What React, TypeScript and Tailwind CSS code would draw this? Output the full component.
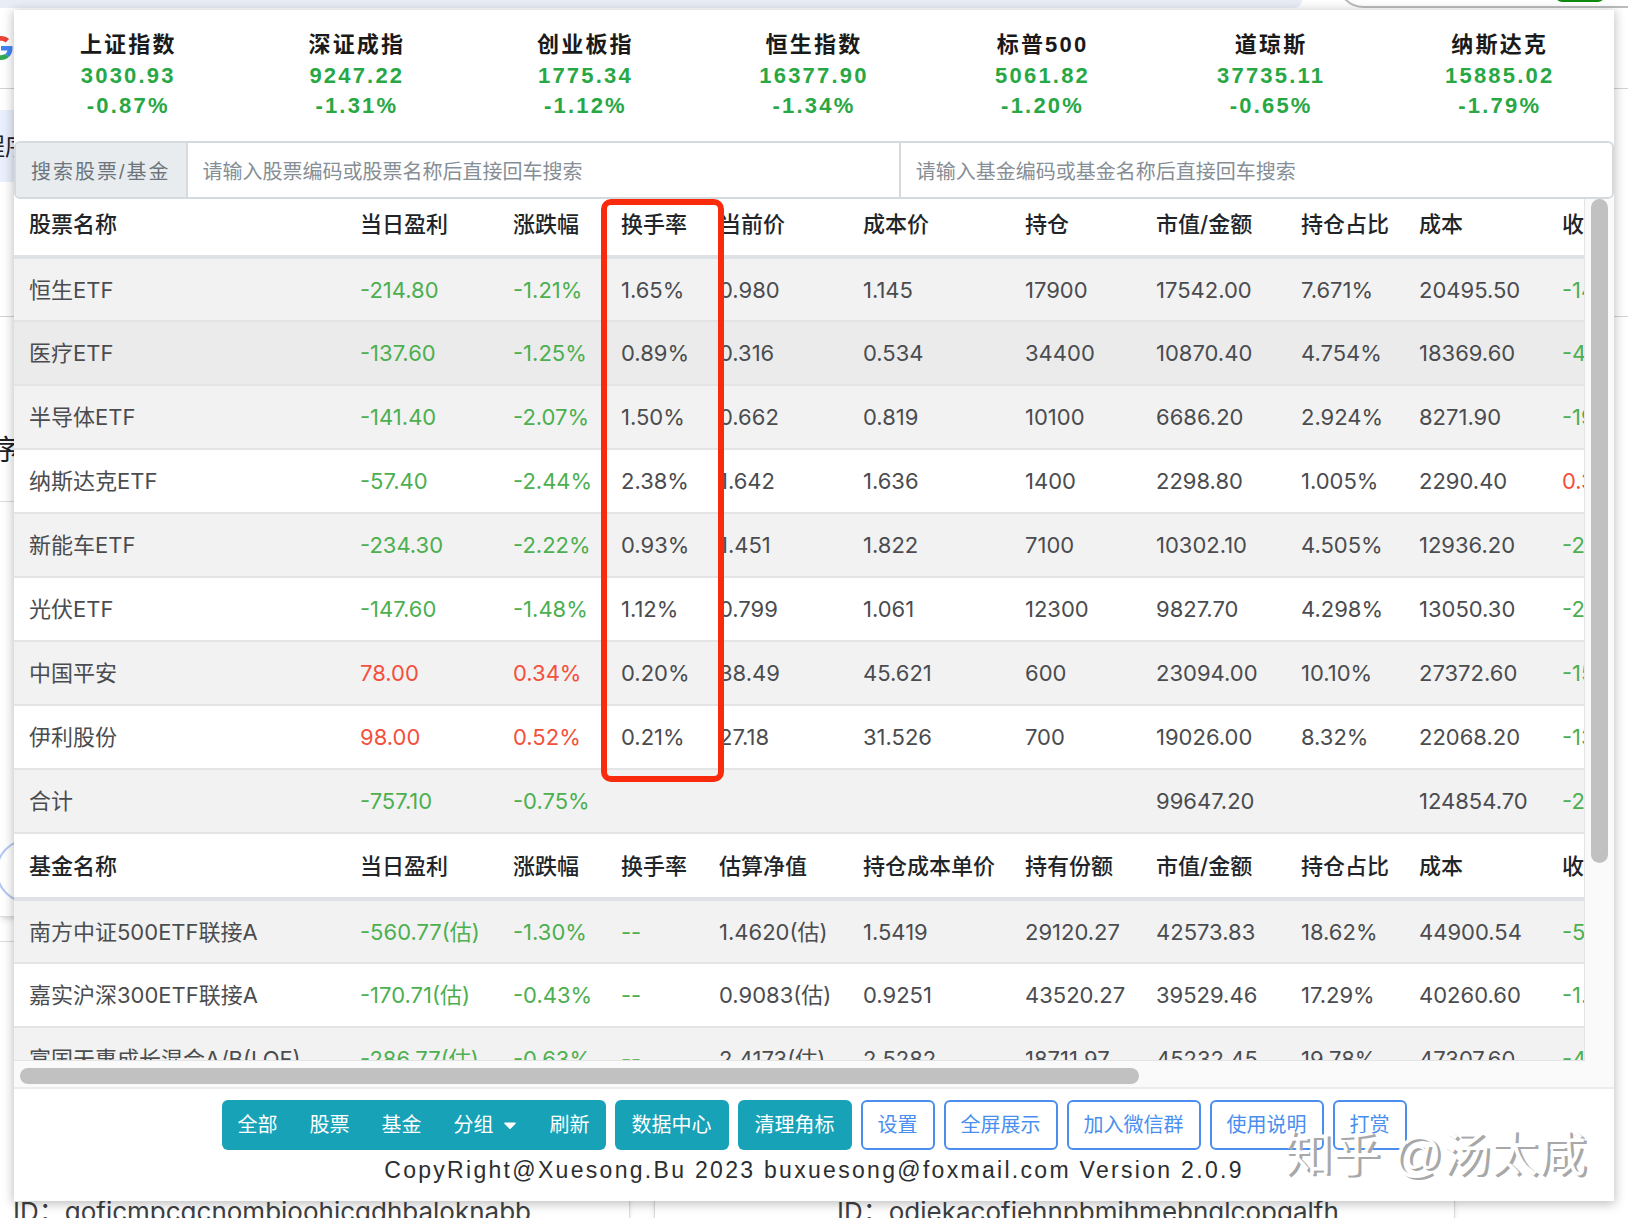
import React from 'react';
import { FaCaretDown } from 'react-icons/fa';

interface IndexQuote {
  name: string;
  value: string;
  change: string;
}

const indexes: IndexQuote[] = [
  { name: '上证指数', value: '3030.93', change: '-0.87%' },
  { name: '深证成指', value: '9247.22', change: '-1.31%' },
  { name: '创业板指', value: '1775.34', change: '-1.12%' },
  { name: '恒生指数', value: '16377.90', change: '-1.34%' },
  { name: '标普500', value: '5061.82', change: '-1.20%' },
  { name: '道琼斯', value: '37735.11', change: '-0.65%' },
  { name: '纳斯达克', value: '15885.02', change: '-1.79%' },
];

const stockHeaders = ['股票名称', '当日盈利', '涨跌幅', '换手率', '当前价', '成本价', '持仓', '市值/金额', '持仓占比', '成本', '收益率'];
const fundHeaders = ['基金名称', '当日盈利', '涨跌幅', '换手率', '估算净值', '持仓成本单价', '持有份额', '市值/金额', '持仓占比', '成本', '收益率'];

const stocks: string[][] = [
  ['恒生ETF', '-214.80', '-1.21%', '1.65%', '0.980', '1.145', '17900', '17542.00', '7.671%', '20495.50', '-14.41%'],
  ['医疗ETF', '-137.60', '-1.25%', '0.89%', '0.316', '0.534', '34400', '10870.40', '4.754%', '18369.60', '-40.82%'],
  ['半导体ETF', '-141.40', '-2.07%', '1.50%', '0.662', '0.819', '10100', '6686.20', '2.924%', '8271.90', '-19.17%'],
  ['纳斯达克ETF', '-57.40', '-2.44%', '2.38%', '1.642', '1.636', '1400', '2298.80', '1.005%', '2290.40', '0.37%'],
  ['新能车ETF', '-234.30', '-2.22%', '0.93%', '1.451', '1.822', '7100', '10302.10', '4.505%', '12936.20', '-20.36%'],
  ['光伏ETF', '-147.60', '-1.48%', '1.12%', '0.799', '1.061', '12300', '9827.70', '4.298%', '13050.30', '-24.69%'],
  ['中国平安', '78.00', '0.34%', '0.20%', '38.49', '45.621', '600', '23094.00', '10.10%', '27372.60', '-15.63%'],
  ['伊利股份', '98.00', '0.52%', '0.21%', '27.18', '31.526', '700', '19026.00', '8.32%', '22068.20', '-13.79%'],
  ['合计', '-757.10', '-0.75%', '', '', '', '', '99647.20', '', '124854.70', '-20.19%'],
];

const funds: string[][] = [
  ['南方中证500ETF联接A', '-560.77(估)', '-1.30%', '--', '1.4620(估)', '1.5419', '29120.27', '42573.83', '18.62%', '44900.54', '-5.18%'],
  ['嘉实沪深300ETF联接A', '-170.71(估)', '-0.43%', '--', '0.9083(估)', '0.9251', '43520.27', '39529.46', '17.29%', '40260.60', '-1.82%'],
  ['富国天惠成长混合A/B(LOF)', '-286.77(估)', '-0.63%', '--', '2.4173(估)', '2.5282', '18711.97', '45232.45', '19.78%', '47307.60', '-4.39%'],
];

// columns that are coloured by their sign
const signedColumns = [1, 2, 10];

const valueColor = (value: string, column: number) => {
  if (value === '--') return 'text-[#4caf50]';
  if (!signedColumns.includes(column)) return 'text-[#4a4c4f]';
  return value.startsWith('-') ? 'text-[#4caf50]' : 'text-[#f4503c]';
};

const HeaderRow: React.FC<{ headers: string[]; first?: boolean }> = ({ headers, first }) => (
  <tr className={`border-b-4 border-[#dee2e6] bg-white ${first ? 'h-[58px]' : 'h-[66px]'}`}>
    {headers.map((header, i) => (
      <th
        key={i}
        scope="col"
        className={`px-[15px] text-left font-medium text-[#212529] ${first ? 'pb-[6px]' : ''}`}
      >
        {header}
      </th>
    ))}
  </tr>
);

const DataRow: React.FC<{ cells: string[]; background: string }> = ({ cells, background }) => (
  <tr className={`h-16 border-b-2 border-[#e2e4e6] ${background}`}>
    {cells.map((cell, i) => (
      <td key={i} className={`px-[15px] ${valueColor(cell, i)}`}>
        {cell}
      </td>
    ))}
  </tr>
);

const QuoteTable: React.FC = () => (
  <table className="w-[2180px] table-fixed border-collapse whitespace-nowrap font-[Inter,'Noto_Sans_CJK_SC',sans-serif] text-[22px] leading-7">
    <colgroup>
      <col className="w-[331px]" />
      <col className="w-[153px]" />
      <col className="w-[108px]" />
      <col className="w-[98px]" />
      <col className="w-[144px]" />
      <col className="w-[162px]" />
      <col className="w-[131px]" />
      <col className="w-[145px]" />
      <col className="w-[118px]" />
      <col className="w-[143px]" />
      <col />
    </colgroup>
    <tbody>
      <HeaderRow headers={stockHeaders} first />
      {stocks.map((row, i) => (
        <DataRow
          key={row[0]}
          cells={row}
          background={i === 1 ? 'bg-[#ebebeb]' : i % 2 === 0 ? 'bg-[#f2f2f2]' : 'bg-white'}
        />
      ))}
      <HeaderRow headers={fundHeaders} />
      {funds.map((row, i) => (
        <DataRow key={row[0]} cells={row} background={i % 2 === 0 ? 'bg-[#f2f2f2]' : 'bg-white'} />
      ))}
    </tbody>
  </table>
);

const SolidButton: React.FC<{ label: string }> = ({ label }) => (
  <button className="h-[50px] rounded-md bg-[#17a2b8] px-[17px] text-white">{label}</button>
);

const OutlineButton: React.FC<{ label: string }> = ({ label }) => (
  <button className="h-[50px] rounded-md border-2 border-[#4a8ff0] bg-white px-[15px] text-[#4a8ff0]">{label}</button>
);

const Toolbar: React.FC = () => (
  <div className="flex justify-center gap-[9px] text-xl">
    <div className="flex h-[50px] rounded-md bg-[#17a2b8] text-white">
      <button className="px-4">全部</button>
      <button className="px-4">股票</button>
      <button className="px-4">基金</button>
      <button className="flex items-center gap-2 px-4">
        分组
        <FaCaretDown className="h-5 w-4" />
      </button>
      <button className="px-4">刷新</button>
    </div>
    <SolidButton label="数据中心" />
    <SolidButton label="清理角标" />
    <OutlineButton label="设置" />
    <OutlineButton label="全屏展示" />
    <OutlineButton label="加入微信群" />
    <OutlineButton label="使用说明" />
    <OutlineButton label="打赏" />
  </div>
);

// Browser page that stays visible around the popup
const PageBehind: React.FC = () => (
  <div className="absolute inset-0 overflow-hidden bg-white font-[Inter,'Noto_Sans_CJK_SC',sans-serif]">
    <div className="absolute left-0 top-0 h-2 w-[80%] rounded-br-full bg-[#e9edf6]" />
    <div className="absolute -top-12 left-[1336px] right-[-60px] h-14 rounded-[28px] border-2 border-[#b9bbbd]" />
    <div className="absolute right-6 top-[-10px] h-3 w-12 rounded-md bg-[#118a11]" />
    <svg className="absolute left-[-11px] top-9 h-6 w-6" viewBox="0 0 48 48">
      <path fill="#ea4335" d="M24 9.5c3.5 0 6.700 1.200 9.200 3.600l6.900-6.900C35.900 2.400 30.500 0 24 0 14.600 0 6.500 5.400 2.600 13.200l8 6.200C12.400 13.700 17.700 9.500 24 9.500z" />
      <path fill="#4285f4" d="M47 24.500c0-1.600-.2-3.100-.4-4.500H24v9h12.900c-.6 3-2.200 5.500-4.700 7.200l7.700 6C44.400 38 47 31.800 47 24.500z" />
      <path fill="#fbbc05" d="M10.500 28.600a14.500 14.500 0 0 1 0-9.200l-8-6.200a24 24 0 0 0 0 21.600z" />
      <path fill="#34a853" d="M24 48c6.500 0 11.900-2.100 15.900-5.800l-7.700-6c-2.200 1.500-4.900 2.300-8.200 2.300-6.300 0-11.600-4.200-13.500-9.900l-8 6.200C6.500 42.600 14.600 48 24 48z" />
    </svg>
    <div className="absolute left-0 top-[88px] h-px w-full bg-[#d0d2d4]" />
    <div className="absolute left-0 top-[110px] h-[72px] w-8 bg-[#e9effc]" />
    <span className="absolute left-[-19px] top-[131px] text-2xl leading-8 text-[#202124]">程序</span>
    <div className="absolute left-0 top-[316px] h-px w-full bg-[#d0d2d4]" />
    <span className="absolute left-[-9px] top-[432px] text-[28px] leading-9 text-[#202124]">序</span>
    <div className="absolute left-0 top-[501px] h-[416px] w-[630px] border-b border-t border-[#dadce0] shadow-md" />
    <div className="absolute left-[-4px] top-[839px] h-16 w-40 rounded-full border-2 border-[#b4c9f2]" />
    <div className="absolute bottom-[-20px] left-[-10px] top-[941px] w-[640px] rounded-lg border border-[#dadce0] shadow-md" />
    <div className="absolute bottom-[-20px] left-[654px] top-[941px] w-[801px] rounded-lg border border-[#dadce0] shadow-md" />
    <span className="absolute left-[13px] top-[1196px] text-[26px] leading-8 text-[#3c4043]">ID：goficmpcgcnombioohicgdhbaloknabb</span>
    <span className="absolute left-[837px] top-[1196px] text-[26px] leading-8 text-[#3c4043]">ID：odiekacofiehnpbmihmebnglcopgalfh</span>
  </div>
);

const App: React.FC = () => (
  <div className="relative h-screen overflow-hidden px-[14px] pt-[10px]">
    <PageBehind />

    <main className="relative bg-white pb-[15px] font-['Liberation_Sans','Noto_Sans_CJK_SC',sans-serif] shadow-[0_2px_10px_1px_rgba(0,0,0,0.25)]">
      {/* Market indexes */}
      <section className="grid h-[131px] grid-cols-7 pt-[19px] text-center text-[22px] font-bold leading-[30px] tracking-widest">
        {indexes.map((index) => (
          <div key={index.name}>
            <div className="leading-8 text-[#1a1a1a]">{index.name}</div>
            <div className="text-[#28a745]">{index.value}</div>
            <div className="text-[#28a745]">{index.change}</div>
          </div>
        ))}
      </section>

      {/* Search */}
      <form className="flex h-[58px] divide-x-2 divide-[#d5dade] rounded-md border-2 border-[#d5dade] text-xl">
        <label htmlFor="stock-search" className="flex items-center rounded-l bg-[#e9ecef] px-[15px] pt-1 tracking-widest text-[#6c757d]">
          搜索股票/基金
        </label>
        <input
          id="stock-search"
          type="text"
          placeholder="请输入股票编码或股票名称后直接回车搜索"
          className="min-w-0 flex-1 px-[15px] pt-1 placeholder:text-[#868e96]"
        />
        <input
          type="text"
          aria-label="搜索基金"
          placeholder="请输入基金编码或基金名称后直接回车搜索"
          className="min-w-0 flex-1 px-[15px] pt-1 placeholder:text-[#868e96]"
        />
      </form>

      {/* Quotes with their scrollbars */}
      <section className="relative flex h-[890px] flex-col border-b-2 border-[#ececec] bg-[#fafafa]">
        <div className="flex min-h-0 flex-1">
          <div className="min-w-0 flex-1 overflow-hidden border-b border-r border-[#e4e4e4]">
            <QuoteTable />
          </div>
          <div className="w-[29px] px-[6px]">
            <div className="h-[664px] rounded-full bg-[#c1c1c1]" />
          </div>
        </div>
        <div className="flex h-[26px] items-end pb-[3px] pl-[6px] pr-10">
          <div className="h-4 w-[72%] rounded-full bg-[#c1c1c1]" />
        </div>
        <div className="absolute left-[587px] top-0 h-[583px] w-[123px] rounded-[10px] border-[6px] border-[#fa2b0c]" />
      </section>

      <footer className="pt-[11px]">
        <Toolbar />
        <p className="pt-1 text-center text-[23px] leading-8 tracking-widest text-[#2b2e31]">
          CopyRight@Xuesong.Bu 2023 buxuesong@foxmail.com Version 2.0.9
        </p>
      </footer>

      {/* Watermark */}
      <div className="absolute bottom-[22px] right-7 whitespace-nowrap text-5xl text-white [text-shadow:3px_2px_0_#a8a8a8]">
        知乎 @汤太咸
      </div>
    </main>
  </div>
);

export default App;
